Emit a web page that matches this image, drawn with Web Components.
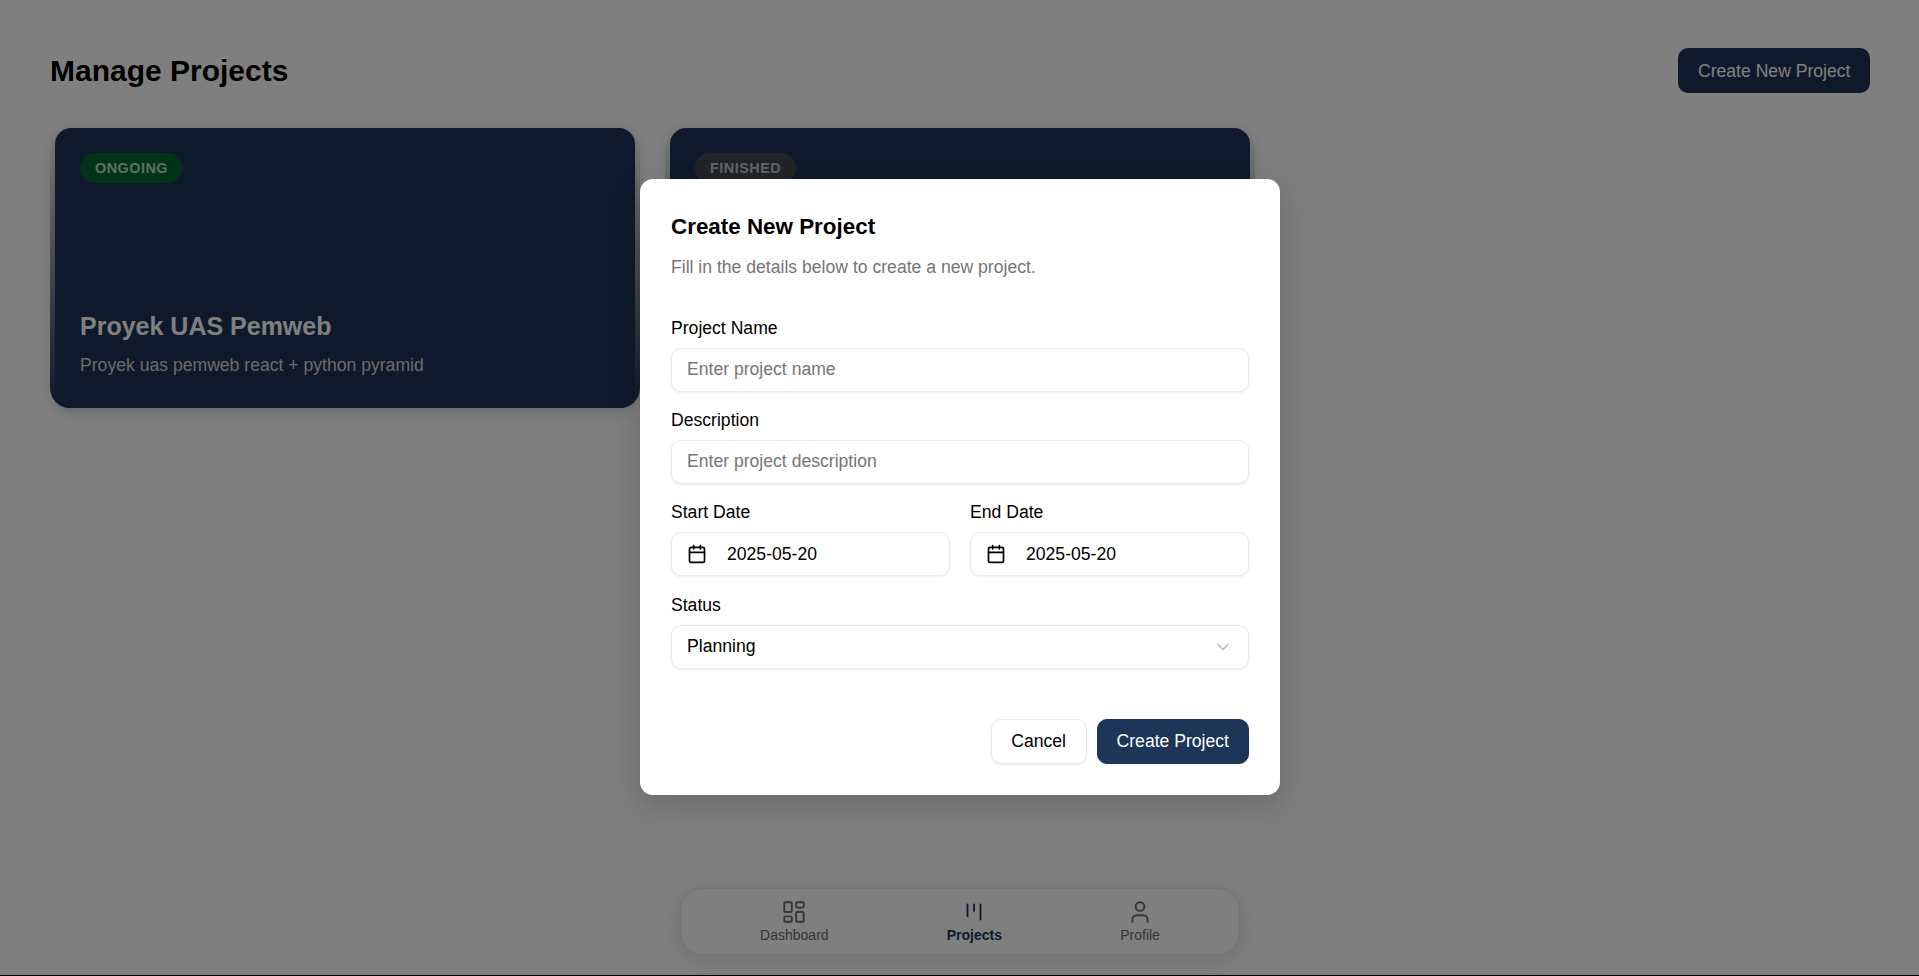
<!DOCTYPE html>
<html lang="en">
<head>
<meta charset="utf-8">
<title>Manage Projects</title>
<style>
html,body{margin:0;padding:0;height:976px;overflow:hidden;background:#000;font-family:"Liberation Sans",Arial,sans-serif;}
</style>
</head>
<body>
<project-app>
  <page-header slot="header" action="Create New Project">Manage Projects</page-header>
  <project-card slot="cards" status="ONGOING" tone="green" name="Proyek UAS Pemweb">Proyek uas pemweb react + python pyramid</project-card>
  <project-card slot="cards" status="FINISHED" tone="grey" name=""></project-card>
  <bottom-nav slot="nav">
    <nav-item icon="dashboard">Dashboard</nav-item>
    <nav-item icon="kanban" active>Projects</nav-item>
    <nav-item icon="user">Profile</nav-item>
  </bottom-nav>
  <project-modal slot="modal" heading="Create New Project" subtitle="Fill in the details below to create a new project.">
    <form-field label="Project Name"><text-box placeholder>Enter project name</text-box></form-field>
    <form-field label="Description"><text-box placeholder>Enter project description</text-box></form-field>
    <field-row>
      <form-field label="Start Date"><text-box icon="calendar">2025-05-20</text-box></form-field>
      <form-field label="End Date"><text-box icon="calendar">2025-05-20</text-box></form-field>
    </field-row>
    <form-field label="Status"><text-box icon="chevron">Planning</text-box></form-field>
    <action-button slot="actions">Cancel</action-button>
    <action-button slot="actions" primary>Create Project</action-button>
  </project-modal>
</project-app>
<script>
const ICONS={
  dashboard:'<rect x="3" y="3" width="7" height="9" rx="1"/><rect x="14" y="3" width="7" height="5" rx="1"/><rect x="14" y="12" width="7" height="9" rx="1"/><rect x="3" y="16" width="7" height="5" rx="1"/>',
  kanban:'<path d="M6 5v11"/><path d="M12 5v6"/><path d="M18 5v14"/>',
  user:'<path d="M19 21v-2a4 4 0 0 0-4-4H9a4 4 0 0 0-4 4v2"/><circle cx="12" cy="7" r="4"/>',
  calendar:'<path d="M8 2v4"/><path d="M16 2v4"/><rect x="3" y="4" width="18" height="18" rx="2"/><path d="M3 10h18"/>',
  chevron:'<path d="m6 9 6 6 6-6"/>'
};
const svg=(n,s,w)=>`<svg xmlns="http://www.w3.org/2000/svg" width="${s}" height="${s}" viewBox="0 0 24 24" fill="none" stroke="currentColor" stroke-width="${w}" stroke-linecap="round" stroke-linejoin="round">${ICONS[n]}</svg>`;
const def=(name,render)=>customElements.define(name,class extends HTMLElement{
  constructor(){super();this.attachShadow({mode:'open'});}
  connectedCallback(){this.shadowRoot.innerHTML=render(this);}
});

def('project-app',()=>`<style>
:host{display:flex;flex-direction:column;position:relative;height:975px;background:#fff;color:#000;overflow:hidden;font-family:"Liberation Sans",Arial,sans-serif;}
.main{flex:1;padding:48px 49px 0 50px;}
.grid{display:grid;grid-template-columns:repeat(3,1fr);gap:25px;margin-top:35px;}
.nav{display:flex;justify-content:center;padding:0 0 20px 1px;}
.overlay{position:absolute;inset:0;padding:0 0 2px 1px;background:rgba(0,0,0,.5);display:flex;align-items:center;justify-content:center;}
</style>
<div class="main"><slot name="header"></slot><div class="grid"><slot name="cards"></slot></div></div>
<div class="nav"><slot name="nav"></slot></div>
<div class="overlay"><slot name="modal"></slot></div>`);

def('page-header',h=>`<style>
:host{display:flex;align-items:center;justify-content:space-between;height:45px;}
h1{margin:0;font-size:30px;font-weight:700;line-height:45px;}
button{all:unset;box-sizing:border-box;height:45px;padding:0 19.5px;border-radius:10px;background:#1d3557;color:#fff;font-size:17.6px;line-height:44px;font-family:inherit;}
</style><h1><slot></slot></h1><button>${h.getAttribute('action')}</button>`);

def('project-card',c=>{
  const green=c.getAttribute('tone')==='green';
  const name=c.getAttribute('name');
  return `<style>
:host{display:block;height:280px;border-radius:20px;background:linear-gradient(to top,#1d3557,transparent);box-shadow:0 6px 16px rgba(0,0,0,.08);}
.in{box-sizing:border-box;height:280px;margin:0 5px;padding:25px;border-radius:16px;background:#1d3557;box-shadow:0 2px 10px rgba(0,0,0,.14);display:flex;flex-direction:column;}
.b{align-self:flex-start;height:30px;padding:0 15px;border-radius:15px;font-size:14.4px;font-weight:700;letter-spacing:.5px;line-height:30px;background:${green?'#056434':'#454a50'};color:${green?'#b4e4c0':'#c8c8c8'};}
h2{margin:auto 0 0;font-size:25px;line-height:34px;font-weight:700;color:#fff;}
p{margin:10px 0 0;font-size:17.6px;line-height:24px;color:#d6d6da;padding-bottom:6px;}
</style><div class="in"><span class="b">${c.getAttribute('status')}</span>${name?`<h2>${name}</h2><p><slot></slot></p>`:''}</div>`;});

def('bottom-nav',()=>`<style>
:host{display:flex;box-sizing:border-box;width:560px;height:67px;padding:9.5px 20px 0;justify-content:space-around;border:1px solid #e8e8e8;border-radius:22px;background:#fff;box-shadow:0 5px 20px rgba(0,0,0,.12);}
</style><slot></slot>`);

def('nav-item',n=>{
  const a=n.hasAttribute('active');
  return `<style>
:host{display:flex;flex-direction:column;align-items:center;color:${a?'#1d3557':'#6b6b6b'};font-size:14px;font-weight:${a?700:400};}
svg{display:block;}
span{display:block;line-height:18px;margin-top:1px;}
</style>${svg(n.getAttribute('icon'),26,1.7)}<span><slot></slot></span>`;});

def('project-modal',m=>`<style>
:host{display:block;box-sizing:border-box;width:640px;height:616px;padding:31px 31px 30px;border-radius:13px;background:#fff;box-shadow:0 10px 30px rgba(0,0,0,.18);color:#000;}
h2{margin:0;font-size:22.4px;line-height:34px;font-weight:700;}
p{margin:10px 0 0;font-size:17.6px;line-height:26px;color:#757575;}
.body{display:flex;flex-direction:column;gap:17.4px;margin-top:37px;}
.act{display:flex;justify-content:flex-end;gap:10px;margin-top:50.5px;}
</style><h2>${m.getAttribute('heading')}</h2><p>${m.getAttribute('subtitle')}</p>
<div class="body"><slot></slot></div><div class="act"><slot name="actions"></slot></div>`);

def('form-field',f=>`<style>
:host{display:block;min-width:0;}
label{display:block;font-size:17.6px;line-height:22px;margin-bottom:9px;}
</style><label>${f.getAttribute('label')}</label><slot></slot>`);

def('field-row',()=>`<style>
:host{display:grid;grid-template-columns:1fr 1fr;gap:20px;}
</style><slot></slot>`);

def('text-box',t=>{
  const ic=t.getAttribute('icon');
  const cal=ic==='calendar';
  return `<style>
:host{display:flex;align-items:center;box-sizing:border-box;height:44px;padding:0 15px;border:1px solid #e9e9e9;border-radius:10px;background:#fff;box-shadow:0 1px 3px rgba(0,0,0,.08);font-size:17.6px;color:${t.hasAttribute('placeholder')?'#757575':'#000'};}
svg{display:block;flex:none;}
.t{flex:1;margin-left:${cal?20:0}px;white-space:nowrap;}
.ch{color:#b4b4b4;}
</style>${cal?svg('calendar',20,2):''}<span class="t"><slot></slot></span>${ic==='chevron'?`<span class="ch">${svg('chevron',20,1.5)}</span>`:''}`;});

def('action-button',b=>{
  const p=b.hasAttribute('primary');
  return `<style>
:host{display:block;box-sizing:border-box;height:45px;padding:0 ${p?19:19.5}px;border:1px solid ${p?'#1d3557':'#e9e9e9'};border-radius:10px;background:${p?'#1d3557':'#fff'};color:${p?'#fff':'#000'};font-size:17.6px;line-height:43px;box-shadow:0 1px 3px rgba(0,0,0,.08);}
</style><slot></slot>`;});
</script>
</body>
</html>
